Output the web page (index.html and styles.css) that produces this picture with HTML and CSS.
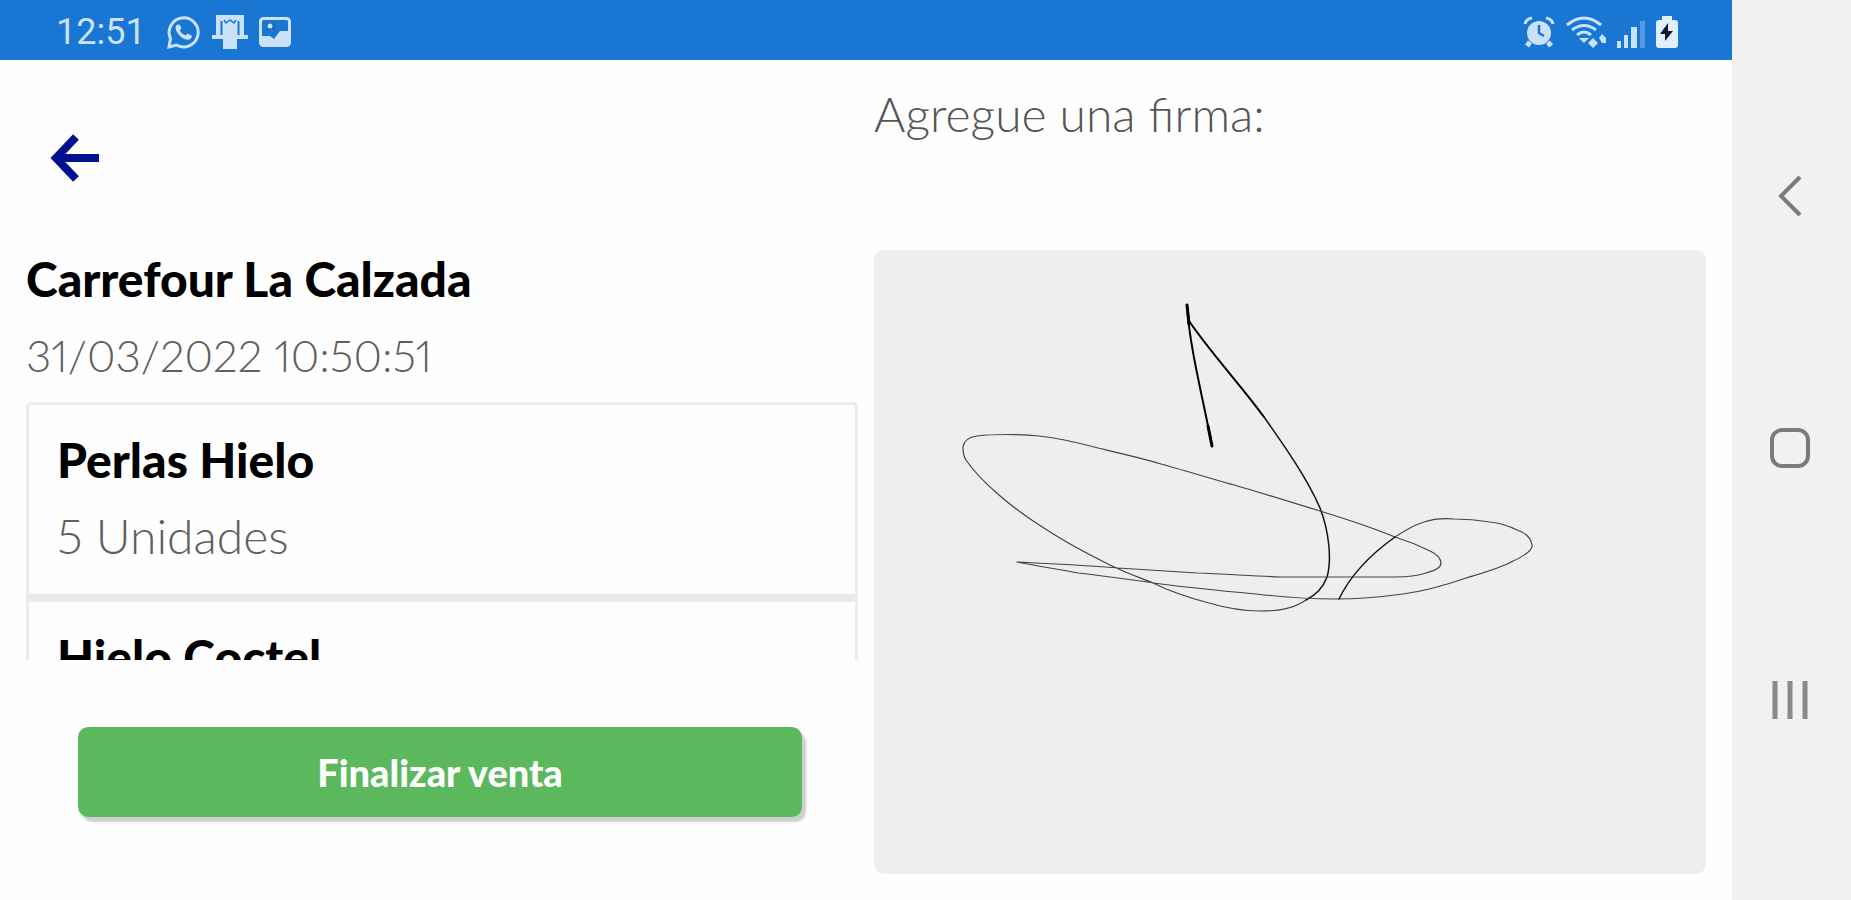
FILE: index.html
```html
<!DOCTYPE html>
<html lang="es">
<head>
<meta charset="utf-8">
<title>Finalizar venta</title>
<link rel="stylesheet" href="styles.css">
</head>
<body>
<div class="screen">
  <header class="status">
    <span class="clock">12:51</span>
    <svg class="ico" width="36" height="34" viewBox="0 0 36 34" fill="none"><path d="M4 32 5.500 23.500A14.500 14.500 0 1 1 11.500 30Z" stroke="currentColor" stroke-width="3"/><path d="M12.500 9.500C10 11 10 14 13 18.500S21 25.500 24.500 24.500C27 23.500 27 21.500 26.500 20.500L22.500 18.500 20.500 20.500C18 19.500 16 17.500 14.800 15.200L16.500 13 14.500 9.500Z" fill="currentColor"/></svg>
    <svg class="ico" width="36" height="34" viewBox="0 0 36 34"><path d="M4 0H32V20H36V24H25V34H11V24H0V20H4Z" fill="currentColor"/><path d="M9.500 6V20M26.500 6V20" stroke="#1976d2" stroke-width="2" fill="none"/><path d="M12 5 14 8 18 5 22 8 24 5" stroke="#1976d2" stroke-width="1.500" fill="none"/></svg>
    <svg class="ico" width="32" height="32" viewBox="0 0 32 32"><rect x="1.500" y="2.500" width="29" height="27" rx="3" fill="none" stroke="currentColor" stroke-width="3"/><path d="M3 20H11L15 23 21 15H29V29H3Z" fill="currentColor"/><path d="M8 7H16V15L12 12 8 16Z" fill="#1565b8"/><circle cx="11" cy="10" r="2.500" fill="currentColor"/></svg>
    <span class="fill"></span>
    <svg class="ico" width="32" height="32" viewBox="0 0 32 32"><circle cx="16" cy="17" r="12" fill="currentColor"/><path d="M7 26 4 30M25 26 28 30" stroke="currentColor" stroke-width="5"/><path d="M2 8Q3 3 9 2M30 8Q29 3 23 2" stroke="currentColor" stroke-width="3" fill="none"/><path d="M16 9V17L21 20" stroke="#1976d2" stroke-width="2.500" fill="none"/></svg>
    <svg class="ico" width="40" height="32" viewBox="0 0 40 32" fill="none" stroke="currentColor" stroke-width="3"><path d="M1 9Q18-5 35 9M6 14Q18 5 30 14M11 19Q18 13 25 19"/><path d="M13 22 18 27 23 22Z" fill="currentColor" stroke="none"/><path d="M22 27H32L27 32ZM22 27 27 22 32 27Z" fill="currentColor" stroke="none"/><path d="M33 22 36 18 40 22V27H36Z" fill="currentColor" stroke="none"/></svg>
    <svg class="ico" width="28" height="32" viewBox="0 0 28 32" fill="currentColor"><path d="M0 25H4V32H0ZM7 19H11V32H7ZM14 11H20V32H14Z"/><path d="M23 5H28V32H23Z" opacity=".35"/></svg>
    <svg class="ico" width="22" height="32" viewBox="0 0 22 32"><path d="M6 0H16V4H19Q22 4 22 7V29Q22 32 19 32H3Q0 32 0 29V7Q0 4 3 4H6Z" fill="#e2effc"/><path d="M12 7 4 18H9V25L17 15H12Z" fill="#0b1c2c"/></svg>
  </header>
  <main class="content">
    <section class="sale">
      <div class="topbar">
        <button class="back" aria-label="Volver"><svg width="50" height="48" viewBox="0 0 50 48" fill="none" stroke="#00108f" stroke-width="8"><path d="M26 3 6 24 26 45M6 24H49"/></svg></button>
      </div>
      <h1 class="name">Carrefour La Calzada</h1>
      <p class="detail date">31/03/2022 10:50:51</p>
      <ul class="items">
        <li class="item"><h2 class="name">Perlas Hielo</h2><p class="detail">5 Unidades</p></li>
        <li class="item"><h2 class="name">Hielo Coctel</h2></li>
      </ul>
      <button class="finish">Finalizar venta</button>
    </section>
    <section class="sign">
      <p class="detail label" id="sign-label">Agregue una firma:</p>
      <div class="pad">
        <svg class="ink" viewBox="0 0 832 624" role="img" aria-labelledby="sign-label" fill="none" stroke="#222" stroke-linecap="round" stroke-linejoin="round">
          <path stroke="#000" stroke-width="3" d="M313 55 315 74M334 176 338 196"/>
          <path stroke="#000" stroke-width="2" d="M338 196C330 153 315 95 313 55L315 71C340 107 366 134 390 167"/>
          <path stroke="#111" stroke-width="1.500" d="M390 167C412 198 434 230 446 258C455 281 458 310 453 327C449 338 442 345 432 350"/>
          <path stroke="#444" stroke-width="1.200" d="M432 350C419 359 404 361 386 361C367 361 352 358 335 353C316 348 297 342 279 333C264 327 250 322 236 315C218 306 200 297 181 285C161 273 142 260 125 245C111 233 100 222 92 210C89 206 89 201 89 197C90 191 95 187 103 186C119 184 146 184 165 186C185 188 205 193 224 198C245 203 267 208 287 214C316 222 345 231 374 239L446 261C472 269 499 278 521 287C534 291 546 296 556 301C563 304 567 309 567 313C567 318 560 321 552 323C543 326 532 327 521 327H406C378 326 351 324 323 323L244 318C211 315 177 314 143 312C163 316 183 319 204 323C231 326 259 330 287 334C318 338 350 341 382 344C408 347 435 349 461 349C484 349 507 347 529 344C551 341 572 335 592 328C609 323 627 318 639 311C650 306 659 300 658 295C657 288 652 283 643 280C635 276 626 273 616 272C604 270 592 269 580 269C569 268 559 269 550 272C540 275 530 281 521 287"/>
          <path stroke="#111" stroke-width="1.500" d="M521 287C500 302 477 324 465 349"/>
        </svg>
      </div>
    </section>
  </main>
</div>
<nav class="system">
  <button class="key" aria-label="Atrás"><svg width="42" height="42" viewBox="0 0 42 42" fill="none" stroke="#7b7b7b" stroke-width="4"><path d="M31 2 12 21 31 40"/></svg></button>
  <button class="key" aria-label="Inicio"><svg width="42" height="42" viewBox="0 0 42 42" fill="none" stroke="#7b7b7b" stroke-width="4"><rect x="3" y="3" width="36" height="36" rx="10"/></svg></button>
  <button class="key" aria-label="Recientes"><svg width="42" height="42" viewBox="0 0 42 42" fill="none" stroke="#8a8a8a" stroke-width="5"><path d="M6 2V40M21 2V40M36 2V40"/></svg></button>
</nav>
</body>
</html>
```
FILE: styles.css
```css
* { box-sizing: border-box; }
body {
  margin: 0;
  display: flex;
  min-height: 100vh;
  background: #fefefe;
  font-family: Lato, "Open Sans", sans-serif;
}
button {
  border: 0;
  padding: 0;
  background: none;
  font-family: inherit;
}
svg { display: block; }
h1, h2, p, ul { margin: 0; padding: 0; }
.screen {
  flex: 1;
  display: flex;
  flex-direction: column;
  height: 100vh;
}
.status {
  display: flex;
  align-items: center;
  gap: 11px;
  height: 60px;
  padding: 3px 54px 0 56px;
  background: #1976d2;
  color: #c9e2fa;
}
.clock {
  margin-right: 8px;
  font: 36px/40px Roboto, sans-serif;
}
.fill { flex: 1; }
.content {
  flex: 1;
  min-height: 0;
  display: grid;
  grid-template-columns: 1fr 1fr;
  gap: 16px;
  padding: 0 26px;
}
.sale, .sign {
  display: flex;
  flex-direction: column;
  min-height: 0;
}
.topbar {
  flex: none;
  height: 181px;
  padding: 74px 24px 0;
}
.name {
  color: #000;
  font-size: 48px;
  font-weight: 900;
  line-height: 76px;
}
.detail {
  color: #606060;
  font-size: 48px;
  font-weight: 300;
  font-variant-numeric: proportional-nums;
  line-height: 76px;
}
.date { font-size: 44px; }
.items {
  flex: 1;
  min-height: 0;
  margin-top: 9px;
  overflow: hidden;
  list-style: none;
  border: 3px solid #ebebeb;
  border-bottom: 0;
  border-radius: 5px 5px 0 0;
}
.item { padding: 17px 28px 20px; }
.item + .item { border-top: 8px solid #eaeaea; }
.finish {
  flex: none;
  height: 90px;
  margin: 67px 56px 83px 52px;
  border-radius: 10px;
  background: #5cb85c;
  box-shadow: 4px 5px 2px #cfcfcf;
  color: #fff;
  font-size: 38px;
  font-weight: 900;
}
.label {
  margin: 16px 0 98px;
  color: #555;
}
.pad {
  flex: 1;
  min-height: 0;
  margin-bottom: 26px;
  border-radius: 10px;
  background: #eee;
}
.ink { width: 100%; height: 100%; }
.system {
  display: flex;
  flex-direction: column;
  width: 119px;
  padding: 70px 3px 74px 0;
  background: #f1f1f1;
}
.key {
  flex: 1;
  display: flex;
  align-items: center;
  justify-content: center;
}
```
